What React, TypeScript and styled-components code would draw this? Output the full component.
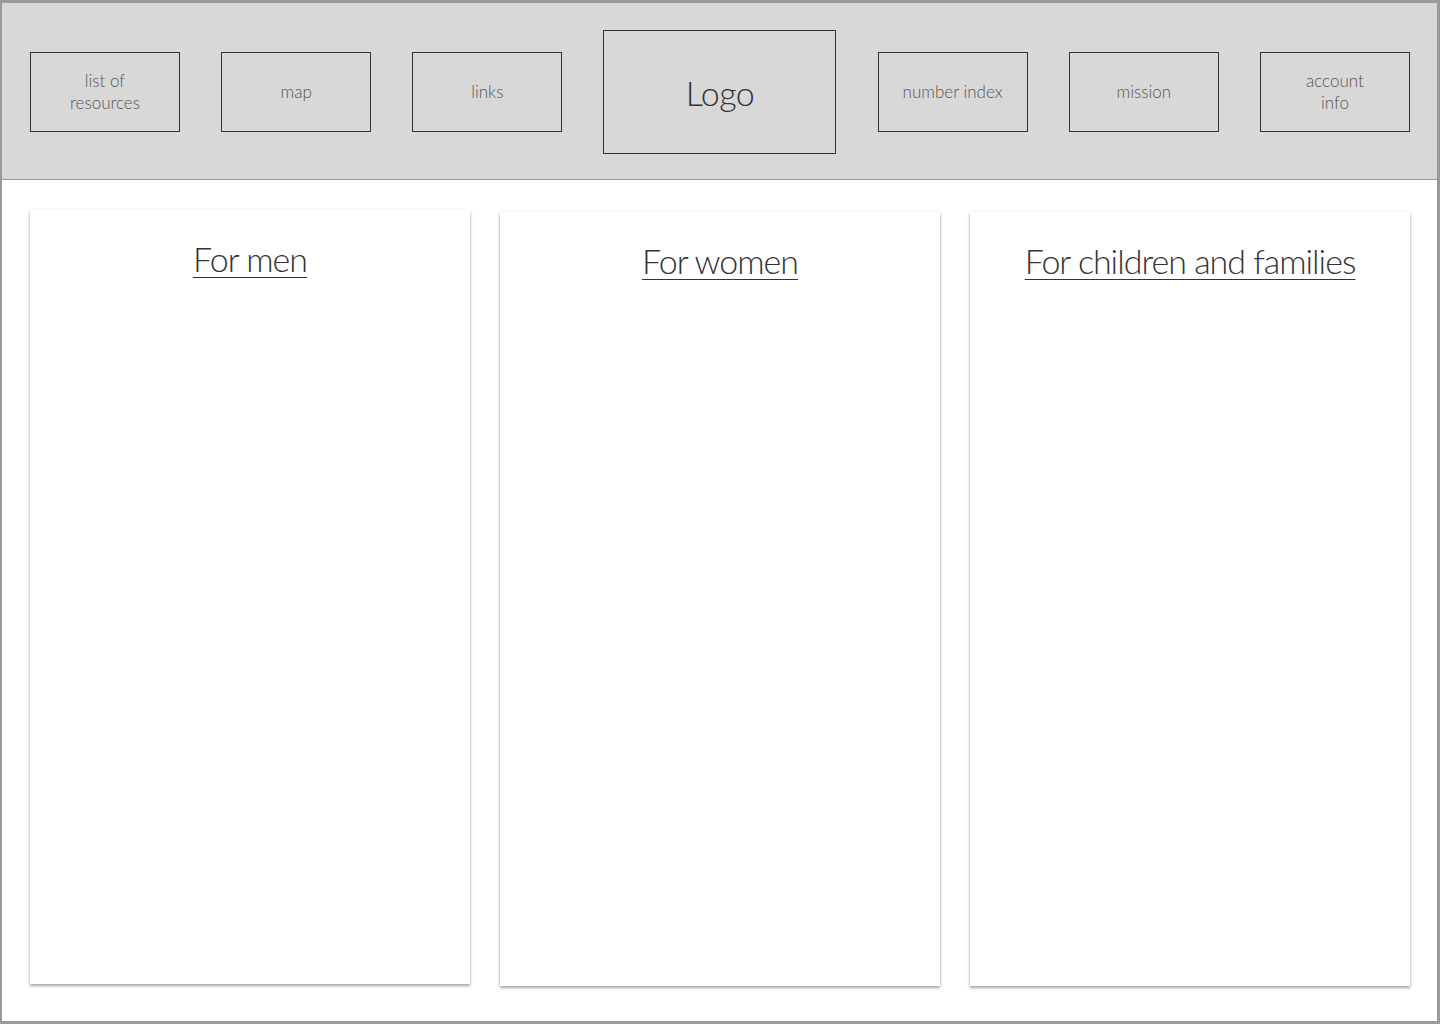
import React from 'react';
import styled, { createGlobalStyle } from 'styled-components';

const GlobalStyle = createGlobalStyle`
  html, body {
    margin: 0;
    padding: 0;
    background: #fff;
  }
  body {
    font-family: Lato, 'Open Sans', sans-serif;
    font-weight: 300;
  }
`;

const StyledFrame = styled.div`
  width: 1440px;
  height: 1024px;
  box-sizing: border-box;
  border: 3px solid #9a9a9a;
  border-left-width: 2px;
  display: flex;
  flex-direction: column;
  background: #fff;
`;

const StyledHeader = styled.header`
  flex: 0 0 177px;
  box-sizing: border-box;
  background: #d8d8d8;
  border-bottom: 1px solid #9a9a9a;
  display: flex;
  align-items: center;
  justify-content: space-between;
  padding: 2px 27px 0 28px;
`;

const StyledNavBox = styled.div<{ $logo?: boolean }>`
  flex: 0 0 ${(p) => (p.$logo ? '233px' : '150px')};
  height: ${(p) => (p.$logo ? '124px' : '80px')};
  box-sizing: border-box;
  border: 1px solid #333;
  display: flex;
  align-items: center;
  justify-content: center;
  text-align: center;
  color: ${(p) => (p.$logo ? '#333' : '#555')};
  font-size: ${(p) => (p.$logo ? '34px' : '17px')};
  line-height: ${(p) => (p.$logo ? '1' : '22px')};
  letter-spacing: ${(p) => (p.$logo ? '-0.5px' : '0')};
  padding-top: ${(p) => (p.$logo ? '1px' : '0')};
`;

const StyledMain = styled.main`
  flex: 1;
  display: flex;
  align-items: flex-start;
  gap: 30px;
  padding: 30px 0 0 28px;
`;

const StyledCard = styled.section<{ $shift?: number }>`
  flex: 0 0 440px;
  height: 774px;
  margin-top: ${(p) => p.$shift ?? 0}px;
  background: #fff;
  box-shadow: 0 2px 3px rgba(0, 0, 0, 0.35), 0 0 2px rgba(0, 0, 0, 0.08);
  display: flex;
  flex-direction: column;
  align-items: center;
  padding-top: 28px;
  box-sizing: border-box;
`;

const StyledTitle = styled.a`
  font-size: 34px;
  line-height: 42px;
  letter-spacing: -1px;
  color: #333;
  text-decoration: underline;
  text-decoration-thickness: 1px;
  text-underline-offset: 5px;
`;

const navItems = [
  { label: ['list of', 'resources'] },
  { label: ['map'] },
  { label: ['links'] },
  { label: ['Logo'], logo: true },
  { label: ['number index'] },
  { label: ['mission'] },
  { label: ['account', 'info'] },
];

const cards = [
  { title: 'For men', shift: 0 },
  { title: 'For women', shift: 2 },
  { title: 'For children and families', shift: 2 },
];

export default function App() {
  return (
    <>
      <GlobalStyle />
      <StyledFrame>
        <StyledHeader>
          {navItems.map((item) => (
            <StyledNavBox key={item.label.join(' ')} $logo={item.logo}>
              <span>
                {item.label.map((line, i) => (
                  <React.Fragment key={line}>
                    {i > 0 && <br />}
                    {line}
                  </React.Fragment>
                ))}
              </span>
            </StyledNavBox>
          ))}
        </StyledHeader>
        <StyledMain>
          {cards.map((card) => (
            <StyledCard key={card.title} $shift={card.shift}>
              <StyledTitle>{card.title}</StyledTitle>
            </StyledCard>
          ))}
        </StyledMain>
      </StyledFrame>
    </>
  );
}
